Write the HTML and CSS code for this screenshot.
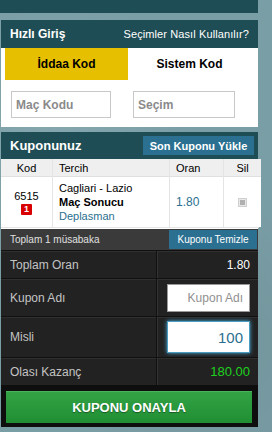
FILE: index.html
```html
<!DOCTYPE html>
<html lang="tr">
<head>
<meta charset="utf-8">
<title>Hızlı Giriş</title>
<link rel="stylesheet" href="styles.css">
</head>
<body>
<div class="page">
  <div class="topbar"></div>

  <section class="panel quick">
    <header class="head">
      <span class="head-title">Hızlı Giriş</span>
      <span class="head-link">Seçimler Nasıl Kullanılır?</span>
    </header>
    <div class="tabs">
      <div class="tab active">İddaa Kod</div>
      <div class="tab">Sistem Kod</div>
    </div>
    <div class="fields">
      <div class="field f1">Maç Kodu</div>
      <div class="field f2">Seçim</div>
    </div>
  </section>

  <section class="panel coupon">
    <header class="head coupon-head">
      <span class="head-title big">Kuponunuz</span>
      <span class="btn-load">Son Kuponu Yükle</span>
    </header>
    <div class="table">
      <div class="th c-kod">Kod</div>
      <div class="th c-tercih">Tercih</div>
      <div class="th c-oran">Oran</div>
      <div class="th c-sil">Sil</div>
      <div class="td c-kod">
        <span>6515</span>
        <span class="badge">1</span>
      </div>
      <div class="td c-tercih">
        <span>Cagliari - Lazio</span>
        <b>Maç Sonucu</b>
        <span class="blue">Deplasman</span>
      </div>
      <div class="td c-oran"><span class="blue">1.80</span></div>
      <div class="td c-sil"><span class="del"></span></div>
    </div>
    <div class="sumbar">
      <span class="sum-text">Toplam 1 müsabaka</span>
      <span class="btn-clear">Kuponu Temizle</span>
    </div>
    <div class="rows">
      <div class="row r1">
        <div class="lbl">Toplam Oran</div>
        <div class="val">1.80</div>
      </div>
      <div class="row r2">
        <div class="lbl">Kupon Adı</div>
        <div class="val"><div class="inbox ph">Kupon Adı</div></div>
      </div>
      <div class="row r3">
        <div class="lbl">Misli</div>
        <div class="val"><div class="inbox focus">100</div></div>
      </div>
      <div class="row r4">
        <div class="lbl">Olası Kazanç</div>
        <div class="val green">180.00</div>
      </div>
    </div>
    <div class="footer">
      <div class="btn-confirm">KUPONU ONAYLA</div>
    </div>
  </section>
</div>
</body>
</html>
```
FILE: styles.css
```css
html, body {
  margin: 0;
  padding: 0;
}
body {
  width: 272px;
  height: 432px;
  overflow: hidden;
  font-family: "Liberation Sans", Arial, sans-serif;
  background: #7a9ea6;
  background-image:
    radial-gradient(circle at 20% 30%, rgba(255,255,255,0.08), transparent 40%),
    radial-gradient(circle at 80% 80%, rgba(0,0,0,0.06), transparent 40%);
}
.page {
  display: flex;
  flex-direction: column;
}
.topbar {
  width: 258px;
  height: 13px;
  background: #1f4d55;
}
.panel {
  width: 257px;
  margin-left: 1px;
}
.quick {
  margin-top: 7px;
  background: #fff;
}
.head {
  height: 28px;
  background: #1f4d55;
  display: flex;
  align-items: center;
  justify-content: space-between;
  padding: 0 9px 0 9px;
  color: #fff;
}
.head-title {
  font-weight: bold;
  font-size: 12px;
}
.head-title.big {
  font-size: 13px;
}
.head-link {
  font-size: 11px;
  letter-spacing: 0.1px;
}
.tabs {
  display: flex;
  height: 32px;
  padding-left: 4px;
}
.tab {
  width: 123px;
  display: flex;
  align-items: center;
  justify-content: center;
  font-weight: bold;
  font-size: 12px;
  color: #000;
}
.tab.active {
  background: #e6bf00;
}
.fields {
  display: flex;
  padding: 11px 0 9px 10px;
  gap: 22px;
}
.field {
  box-sizing: border-box;
  height: 27px;
  border: 1px solid #c8c8c8;
  display: flex;
  align-items: center;
  padding-left: 4px;
  font-size: 12px;
  font-weight: bold;
  color: #8a8a8a;
}
.f1 { width: 100px; }
.f2 { width: 102px; }

.coupon {
  margin-top: 5px;
  background: #1b1b1b;
}
.coupon-head {
  height: 27px;
  padding-right: 4px;
}
.btn-load {
  background: #2b7090;
  color: #fff;
  font-weight: bold;
  font-size: 11px;
  height: 19px;
  width: 111px;
  display: flex;
  align-items: center;
  justify-content: center;
}
.table {
  display: grid;
  grid-template-columns: 51px 116px 53px 37px;
  grid-template-rows: 18px 50px;
  background: #e4e4e4;
  gap: 0 1px;
  border-bottom: 1px solid #e4e4e4;
  margin-right: -1px;
}
.th {
  background: #efefef;
  font-size: 11px;
  color: #000;
  display: flex;
  align-items: center;
  border-bottom: 1px solid #e0e0e0;
}
.th.c-kod, .th.c-sil {
  justify-content: center;
}
.td {
  background: #fff;
  font-size: 11px;
  color: #000;
  display: flex;
  flex-direction: column;
  justify-content: center;
  line-height: 14px;
}
.td.c-kod, .td.c-sil {
  align-items: center;
}
.th.c-tercih, .td.c-tercih, .th.c-oran, .td.c-oran {
  padding-left: 6px;
}
.td.c-kod {
  gap: 1px;
}
.badge {
  width: 11px;
  height: 11px;
  background: #d90000;
  color: #fff;
  font-size: 9px;
  font-weight: bold;
  line-height: 11px;
  text-align: center;
  border-radius: 1px;
}
.blue {
  color: #2a6f8e;
}
.td.c-oran {
  font-size: 12px;
}
.del {
  width: 7px;
  height: 7px;
  border: 1px solid #d0d0d0;
  background: #b0b0b0;
  box-shadow: inset 0 0 0 1px #e8e8e8;
}
.sumbar {
  height: 21px;
  background: #3a3a3a;
  border-top: 1px solid #fff;
  display: flex;
  align-items: center;
  justify-content: space-between;
  padding: 0 1px 0 9px;
  color: #e0e0e0;
  font-size: 10px;
}
.btn-clear {
  width: 88px;
  height: 19px;
  background: #2b7090;
  color: #fff;
  font-size: 10px;
  display: flex;
  align-items: center;
  justify-content: center;
}
.rows {
  display: flex;
  flex-direction: column;
}
.row {
  display: grid;
  grid-template-columns: 156px 1fr;
  background: #222;
  border-top: 1px solid #111;
  box-shadow: inset 0 1px 0 #2f2f2f;
}
.r1 { height: 27px; }
.r2 { height: 37px; }
.r3 { height: 40px; }
.r4 { height: 27px; }
.lbl {
  display: flex;
  align-items: center;
  padding-left: 9px;
  color: #c4c4c4;
  font-size: 12px;
  border-right: 1px solid #111;
  box-shadow: 1px 0 0 #333;
}
.val {
  display: flex;
  align-items: center;
  justify-content: flex-end;
  padding-right: 8px;
  color: #fff;
  font-size: 12px;
}
.val.green {
  color: #1fd11f;
  font-size: 13px;
}
.inbox {
  box-sizing: border-box;
  width: 83px;
  height: 28px;
  background: #fff;
  border: 1px solid #999;
  display: flex;
  align-items: center;
  justify-content: flex-end;
  padding-right: 6px;
}
.inbox.ph {
  color: #8f8f8f;
  font-size: 12px;
}
.inbox.focus {
  height: 32px;
  border: 1px solid #4a9cc0;
  box-shadow: 0 0 4px #4ab0e0;
  color: #2a6f8e;
  font-size: 15px;
}
.footer {
  height: 42px;
  background: #0e0e0e;
  display: flex;
  align-items: center;
  padding-left: 5px;
  padding-top: 2px;
  box-sizing: border-box;
}
.btn-confirm {
  width: 246px;
  height: 32px;
  background: linear-gradient(#34a346, #208f33);
  box-shadow: inset 0 1px 0 #49b25a;
  color: #fff;
  font-weight: bold;
  font-size: 13px;
  display: flex;
  align-items: center;
  justify-content: center;
  text-shadow: 0 1px 1px rgba(0,0,0,0.4);
}
```
